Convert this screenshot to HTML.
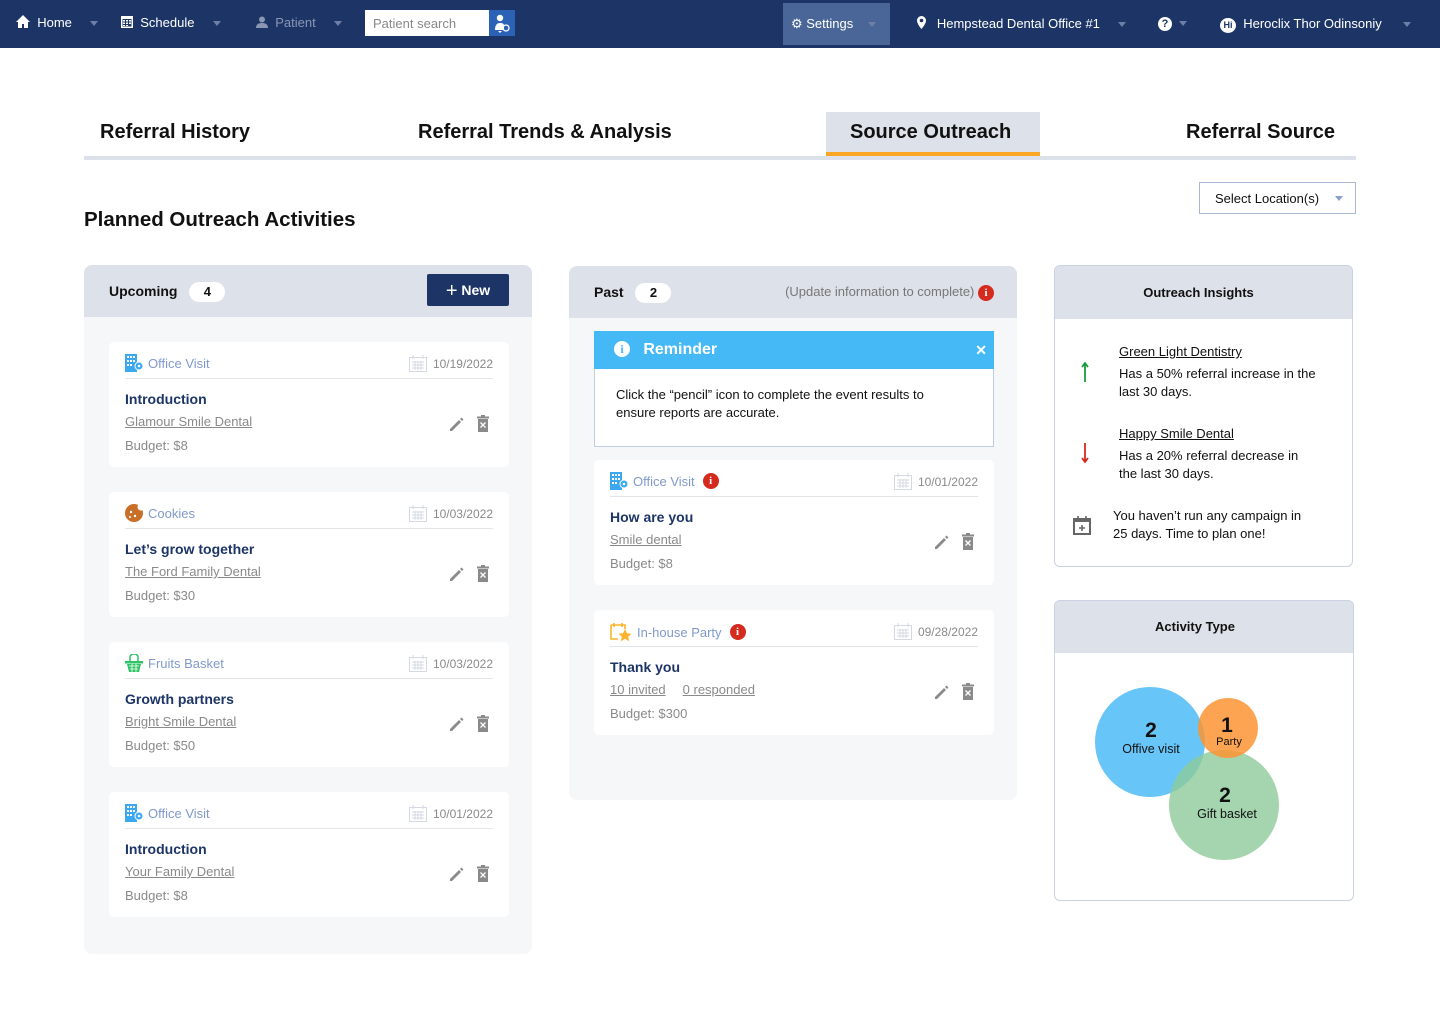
<!DOCTYPE html>
<html><head><meta charset="utf-8"><style>
*{box-sizing:border-box;margin:0;padding:0}
body{width:1440px;height:1014px;position:relative;background:#fff;font-family:"Liberation Sans",Arial,sans-serif;color:#111;overflow:hidden}
.abs{position:absolute}
.nav{left:0;top:0;width:1440px;height:48px;background:#1d3566;color:#fff;font-size:13px}
.nav .it{position:absolute;top:15px;white-space:nowrap}
.caret{display:inline-block;width:0;height:0;border-left:4px solid transparent;border-right:4px solid transparent;border-top:5px solid #6e7fa6;vertical-align:middle}
.tab{top:121px;font-size:20px;font-weight:bold;color:#111}
.panel{background:#f6f7f9;border-radius:8px;overflow:hidden}
.phead{background:#dde1e9;height:52px;position:relative}
.badge{display:inline-block;background:#fff;border-radius:11px;width:36px;height:20px;text-align:center;font-size:13px;font-weight:bold;line-height:20px;margin-left:8px}
.card{position:absolute;width:400px;height:125px;background:#fff;border-radius:5px}
.card .type{position:absolute;left:16px;top:12px;font-size:13px;color:#8099cc;display:flex;align-items:center;gap:5px}
.card .date{position:absolute;right:16px;top:13px;font-size:12px;color:#8a8a8a;display:flex;align-items:center;gap:6px}
.card .div{position:absolute;left:16px;right:16px;top:36px;border-top:1px solid #e3e5ea}
.card .tt{position:absolute;left:16px;top:49px;font-size:14px;font-weight:bold;color:#1d3566}
.card .ln{position:absolute;left:16px;top:72px;font-size:13px;color:#8a8a8a;text-decoration:underline}
.card .bd{position:absolute;left:16px;top:96px;font-size:13px;color:#8a8a8a}
.card .ic{position:absolute;right:20px;top:73px}
.red{display:inline-block;width:16px;height:16px;border-radius:50%;background:#d52a1e;color:#fff;font-size:11px;font-weight:bold;text-align:center;line-height:16px;font-family:"Liberation Serif",serif}
.box{background:#fff;border:1px solid #c9d1e3;border-radius:6px;overflow:hidden}
.bhead{background:#dde1e9;height:53px;text-align:center;font-weight:bold;font-size:13px;line-height:53px}
.ins{font-size:13px;line-height:18px;color:#111}
</style></head><body>
<div class="abs nav">
 <div class="it" style="left:16px"><svg width="14" height="13" viewBox="0 0 14 13" style="vertical-align:-1px"><path d="M7 0L0 7h2v6h4V9h2v4h4V7h2z" fill="#fff"/></svg>&nbsp; Home &nbsp;&nbsp;&nbsp;&nbsp;<span class="caret"></span></div>
 <div class="it" style="left:121px"><svg width="12" height="13" viewBox="0 0 12 13" style="vertical-align:-1px"><rect x="0" y="1" width="12" height="12" fill="#fff"/><rect x="1.5" y="4" width="9" height="7.5" fill="#1d3566"/><path d="M2 5h2v1.5H2zM5 5h2v1.5H5zM8 5h2v1.5H8zM2 7.5h2V9H2zM5 7.5h2V9H5zM8 7.5h2V9H8zM2 10h2v1H2zM5 10h2v1H5z" fill="#fff"/></svg>&nbsp; Schedule &nbsp;&nbsp;&nbsp;&nbsp;<span class="caret"></span></div>
 <div class="it" style="left:256px;color:#8a96b4"><svg width="12" height="12" viewBox="0 0 12 12" style="vertical-align:-1px"><circle cx="6" cy="3.5" r="3" fill="#8a96b4"/><path d="M0 12c0-4 3-5 6-5s6 1 6 5z" fill="#8a96b4"/></svg>&nbsp; Patient &nbsp;&nbsp;&nbsp;&nbsp;<span class="caret"></span></div>
 <div class="abs" style="left:365px;top:10px;width:124px;height:26px;background:#fff;color:#888;font-size:13px;padding:6px 8px">Patient search</div>
 <div class="abs" style="left:489px;top:10px;width:26px;height:26px;background:#2c62b5"><svg width="26" height="26" viewBox="0 0 26 26"><circle cx="11" cy="8" r="3.2" fill="#fff"/><path d="M6 20c0-5 2-7 5-7s4 1 4 3v4z" fill="#fff"/><circle cx="17" cy="18" r="3" fill="none" stroke="#fff" stroke-width="1.3"/><path d="M11 23l-2-2h4z" fill="#fff"/></svg></div>
 <div class="abs" style="left:783px;top:3px;width:107px;height:42px;background:#4a6699"></div>
 <div class="it" style="left:791px;top:16px">⚙ Settings &nbsp;&nbsp;&nbsp;<span class="caret"></span></div>
 <div class="it" style="left:917px;top:16px"><svg width="9" height="13" viewBox="0 0 9 13" style="vertical-align:-1px"><path d="M4.5 0a4.5 4.5 0 0 0-4.5 4.5C0 8 4.5 13 4.5 13S9 8 9 4.5A4.5 4.5 0 0 0 4.5 0zm0 6.3a1.8 1.8 0 1 1 0-3.6 1.8 1.8 0 0 1 0 3.6z" fill="#fff"/></svg> &nbsp;&nbsp;Hempstead Dental Office #1 &nbsp;&nbsp;&nbsp;&nbsp;<span class="caret"></span></div>
 <div class="it" style="left:1158px"><span style="display:inline-block;width:14px;height:14px;border-radius:50%;background:#fff;color:#1d3566;font-size:11px;font-weight:bold;text-align:center;line-height:14px">?</span> &nbsp;<span class="caret"></span></div>
 <div class="it" style="left:1220px;top:16px"><span style="display:inline-block;width:16px;height:15px;border-radius:50%;background:#fff;color:#1d3566;font-size:9px;font-weight:bold;text-align:center;line-height:15px">Hi</span> &nbsp;Heroclix Thor Odinsoniy &nbsp;&nbsp;&nbsp;&nbsp;&nbsp;<span class="caret"></span></div>
</div>

<div class="abs" style="left:84px;top:156px;width:1272px;height:4px;background:#dde1e9"></div>
<div class="abs" style="left:826px;top:112px;width:214px;height:44px;background:#dde1e9;border-bottom:4px solid #fba625"></div>
<div class="abs tab" style="left:100px">Referral History</div>
<div class="abs tab" style="left:418px">Referral Trends &amp; Analysis</div>
<div class="abs tab" style="left:850px">Source Outreach</div>
<div class="abs tab" style="left:1186px">Referral Source</div>

<div class="abs" style="left:1199px;top:182px;width:157px;height:32px;border:1px solid #aab8d3;font-size:13px;padding:8px 15px">Select Location(s) <span style="position:absolute;right:12px;top:13px;border-left:4px solid transparent;border-right:4px solid transparent;border-top:5px solid #8aa0cc"></span></div>
<div class="abs" style="left:84px;top:208px;font-size:20.5px;font-weight:bold">Planned Outreach Activities</div>

<!-- Upcoming -->
<div class="abs panel" style="left:84px;top:265px;width:448px;height:689px">
 <div class="phead"><div class="abs" style="left:25px;top:17px;font-size:14px;font-weight:bold">Upcoming <span class="badge">4</span></div>
 <div class="abs" style="left:343px;top:9px;width:82px;height:32px;background:#1d3566;border-radius:2px;color:#fff;font-weight:bold;font-size:14px;text-align:center;line-height:32px"><span style="font-size:20px;vertical-align:-2px;font-weight:normal">+</span> New</div></div>
</div>
<!-- Past -->
<div class="abs panel" style="left:569px;top:266px;width:448px;height:534px">
 <div class="phead"><div class="abs" style="left:25px;top:17px;font-size:14px;font-weight:bold">Past <span class="badge">2</span></div>
 <div class="abs" style="right:23px;top:18px;font-size:13px;color:#777">(Update information to complete) <span class="red">i</span></div></div>
</div>
<div class="abs" style="left:594px;top:331px;width:400px;height:116px;background:#fff;border:1px solid #c0cde3">
 <div style="height:38px;background:#45b9f5;color:#fff;font-size:16px;font-weight:bold;line-height:38px;padding-left:20px;position:relative;margin:-1px -1px 0"><span style="display:inline-block;width:16px;height:16px;border-radius:50%;background:#fff;color:#45b9f5;font-size:12px;text-align:center;line-height:16px;font-family:'Liberation Serif',serif;vertical-align:1px">i</span>&nbsp;&nbsp; Reminder<span style="position:absolute;right:7px;top:0;font-size:14px">✕</span></div>
 <div style="padding:17px 50px 17px 21px;font-size:13px;line-height:18px">Click the “pencil” icon to complete the event results to ensure reports are accurate.</div>
</div>

<svg width="0" height="0" style="position:absolute"><defs>
<symbol id="cal" viewBox="0 0 18 17"><rect x="0.5" y="2.5" width="17" height="14" fill="none" stroke="#d4d9e4"/><path d="M4 0v4M14 0v4M3 7h12M3 10h12M3 13h12M6 6v9M9 6v9M12 6v9" stroke="#d4d9e4"/></symbol>
<symbol id="act" viewBox="0 0 40 18"><path d="M1 14l9-9 2 2-9 9H1z" fill="#8a8a8a"/><path d="M11 4l1.5-1.5 2 2L13 6z" fill="#8a8a8a"/><rect x="29" y="4" width="10" height="13" fill="#8a8a8a"/><rect x="28" y="1.5" width="12" height="2" fill="#8a8a8a"/><rect x="32" y="0" width="4" height="2" fill="#8a8a8a"/><path d="M31.5 7.5l5 5M36.5 7.5l-5 5" stroke="#fff" stroke-width="1.3"/></symbol>
<symbol id="bld" viewBox="0 0 18 18"><rect x="0" y="0" width="12" height="18" fill="#3ba8f0"/><path d="M2 2h2v2H2zM5 2h2v2H5zM8 2h2v2H8zM2 6h2v2H2zM5 6h2v2H5zM8 6h2v2H8zM2 10h2v2H2zM5 10h2v2H5z" fill="#fff"/><circle cx="14" cy="12" r="4" fill="#3ba8f0" stroke="#fff"/><circle cx="14" cy="12" r="1.3" fill="#fff"/></symbol>
</defs></svg>

<!-- upcoming cards -->
<div class="card" style="left:109px;top:342px"><div class="type"><svg width="18" height="18"><use href="#bld"/></svg>Office Visit</div><div class="date"><svg width="18" height="17"><use href="#cal"/></svg>10/19/2022</div><div class="div"></div><div class="tt">Introduction</div><div class="ln">Glamour Smile Dental</div><div class="bd">Budget: $8</div><svg class="ic" width="40" height="18"><use href="#act"/></svg></div>
<div class="card" style="left:109px;top:492px"><div class="type"><svg width="18" height="18" viewBox="0 0 18 18"><circle cx="9" cy="9" r="9" fill="#c8702a"/><circle cx="16" cy="3" r="3.5" fill="#fff"/><circle cx="6" cy="8" r="1.2" fill="#fff"/><circle cx="10" cy="12" r="1.2" fill="#fff"/><circle cx="5" cy="13" r="1" fill="#fff"/></svg>Cookies</div><div class="date"><svg width="18" height="17"><use href="#cal"/></svg>10/03/2022</div><div class="div"></div><div class="tt">Let’s grow together</div><div class="ln">The Ford Family Dental</div><div class="bd">Budget: $30</div><svg class="ic" width="40" height="18"><use href="#act"/></svg></div>
<div class="card" style="left:109px;top:642px"><div class="type"><svg width="18" height="18" viewBox="0 0 18 18"><path d="M5 7V3a4 3 0 0 1 8 0v4" fill="none" stroke="#2ec464" stroke-width="1.5"/><rect x="0" y="7" width="18" height="2.5" fill="#2ec464"/><path d="M2 10h14l-2 8H4z" fill="#2ec464"/><path d="M4 12h10M5 15h8M7 10v8M11 10v8" stroke="#fff" stroke-width=".8"/></svg>Fruits Basket</div><div class="date"><svg width="18" height="17"><use href="#cal"/></svg>10/03/2022</div><div class="div"></div><div class="tt">Growth partners</div><div class="ln">Bright Smile Dental</div><div class="bd">Budget: $50</div><svg class="ic" width="40" height="18"><use href="#act"/></svg></div>
<div class="card" style="left:109px;top:792px"><div class="type"><svg width="18" height="18"><use href="#bld"/></svg>Office Visit</div><div class="date"><svg width="18" height="17"><use href="#cal"/></svg>10/01/2022</div><div class="div"></div><div class="tt">Introduction</div><div class="ln">Your Family Dental</div><div class="bd">Budget: $8</div><svg class="ic" width="40" height="18"><use href="#act"/></svg></div>

<!-- past cards -->
<div class="card" style="left:594px;top:460px"><div class="type"><svg width="18" height="18"><use href="#bld"/></svg>Office Visit <span class="red" style="margin-left:3px">i</span></div><div class="date"><svg width="18" height="17"><use href="#cal"/></svg>10/01/2022</div><div class="div"></div><div class="tt">How are you</div><div class="ln">Smile dental</div><div class="bd">Budget: $8</div><svg class="ic" width="40" height="18"><use href="#act"/></svg></div>
<div class="card" style="left:594px;top:610px"><div class="type"><svg width="22" height="20" viewBox="0 0 22 20"><path d="M1 3h14v4M1 3v14h7" fill="none" stroke="#fbb42b" stroke-width="1.6"/><path d="M4 1v4M12 1v4" stroke="#fbb42b" stroke-width="1.6"/><path d="M15 7l2 4.2 4.5.5-3.3 3 1 4.5-4.2-2.4-4.2 2.4 1-4.5-3.3-3 4.5-.5z" fill="#fbb42b"/></svg>In-house Party <span class="red" style="margin-left:3px">i</span></div><div class="date"><svg width="18" height="17"><use href="#cal"/></svg>09/28/2022</div><div class="div"></div><div class="tt">Thank you</div><div class="ln">10 invited<span style="display:inline-block;width:17px"></span>0 responded</div><div class="bd">Budget: $300</div><svg class="ic" width="40" height="18"><use href="#act"/></svg></div>

<!-- insights -->
<div class="abs box" style="left:1054px;top:265px;width:299px;height:302px">
 <div class="bhead" style="padding-right:10px">Outreach Insights</div>
 <div class="abs ins" style="left:64px;top:77px"><u>Green Light Dentistry</u><br><div style="margin-top:4px">Has a 50% referral increase in the<br>last 30 days.</div></div>
 <svg class="abs" style="left:26px;top:96px" width="8" height="20"><path d="M4 20V2M1 5l3-4 3 4" stroke="#1a9c3c" stroke-width="1.8" fill="none"/></svg>
 <div class="abs ins" style="left:64px;top:159px"><u>Happy Smile Dental</u><br><div style="margin-top:4px">Has a 20% referral decrease in<br>the last 30 days.</div></div>
 <svg class="abs" style="left:26px;top:177px" width="8" height="20"><path d="M4 0v18M1 15l3 4 3-4" stroke="#d52a1e" stroke-width="1.8" fill="none"/></svg>
 <div class="abs ins" style="left:58px;top:241px">You haven’t run any campaign in<br>25 days. Time to plan one!</div>
 <svg class="abs" style="left:18px;top:250px" width="18" height="19" viewBox="0 0 18 19"><rect x="1" y="3" width="16" height="15" fill="none" stroke="#666" stroke-width="2"/><rect x="1" y="3" width="16" height="3" fill="#666"/><path d="M5 0v4M13 0v4M9 9v6M6 12h6" stroke="#666" stroke-width="1.6"/></svg>
</div>

<!-- activity -->
<div class="abs box" style="left:1054px;top:600px;width:300px;height:301px">
 <div class="bhead" style="height:52px;line-height:52px;padding-right:18px">Activity Type</div>
 <svg class="abs" style="left:0;top:0" width="300" height="301">
  <circle cx="95" cy="141" r="55" fill="#41b7f6" fill-opacity=".8"/>
  <circle cx="169" cy="204" r="55" fill="#8fcb9b" fill-opacity=".8"/>
  <circle cx="173" cy="127" r="30" fill="#fc9432" fill-opacity=".85"/>
  <g font-family="Liberation Sans,Arial,sans-serif" fill="#111" text-anchor="middle">
   <text x="96" y="136" font-size="21" font-weight="bold">2</text>
   <text x="96" y="152" font-size="12.5">Offive visit</text>
   <text x="172" y="131" font-size="21" font-weight="bold">1</text>
   <text x="174" y="144" font-size="11">Party</text>
   <text x="170" y="201" font-size="21" font-weight="bold">2</text>
   <text x="172" y="217" font-size="12.5">Gift basket</text>
  </g>
 </svg>
</div>
</body></html>
